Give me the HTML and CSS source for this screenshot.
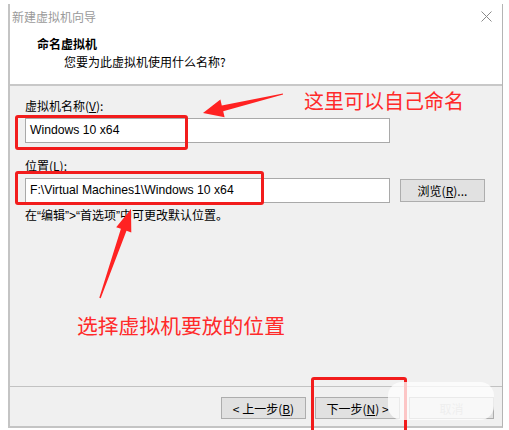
FILE: index.html
```html
<!DOCTYPE html>
<html lang="zh-CN">
<head>
    <meta charset="UTF-8">
    <title>新建虚拟机向导</title>
    <link rel="stylesheet" href="styles.css">
</head>
<body>
    <div class="screen">
        <div class="wizard">
            <div class="title-bar">
                <span class="title-text">新建虚拟机向导</span>
                <span class="close-btn">
                    <svg width="11" height="11" viewBox="0 0 11 11"><path d="M0.5 0.5 L10.5 10.5 M10.5 0.5 L0.5 10.5" stroke="#8a8a8a" stroke-width="1" fill="none"/></svg>
                </span>
            </div>
            <div class="wizard-header">
                <div class="header-title">命名虚拟机</div>
                <div class="header-sub">您要为此虚拟机使用什么名称?</div>
            </div>

            <div class="wizard-body">
                <div class="field-label">虚拟机名称(<u>V</u>):</div>
                <div class="field-row">
                    <div class="text-input">Windows 10 x64</div>
                </div>

                <div class="field-label second">位置(<u>L</u>):</div>
                <div class="field-row">
                    <div class="text-input">F:\Virtual Machines1\Windows 10 x64</div>
                    <button class="win-btn browse">浏览(<u>R</u>)...</button>
                </div>
                <div class="hint">在“编辑”&gt;“首选项”中可更改默认位置。</div>
            </div>

            <div class="wizard-footer">
                <button class="win-btn">&lt; 上一步(<u>B</u>)</button>
                <button class="win-btn">下一步(<u>N</u>) &gt;</button>
                <button class="win-btn cancel">取消</button>
            </div>
        </div>

        <!-- 标注 -->
        <div class="mark mark-name"></div>
        <div class="mark mark-path"></div>
        <div class="mark mark-next"></div>
        <div class="note note-name">这里可以自己命名</div>
        <div class="note note-path">选择虚拟机要放的位置</div>
        <svg class="arrows" width="509" height="430" viewBox="0 0 509 430">
            <polygon fill="#ff2222" points="203,113 224.6,117.2 223.2,111.3 283.1,94.5 282.9,93.5 221.8,105.5 220.4,99.6"/>
            <polygon fill="#ff2222" points="131,209 131.3,232.4 126.5,230.8 100.7,298.2 99.3,297.8 120.9,228.8 116.2,227.2"/>
        </svg>
        <div class="watermark"></div>
    </div>
</body>
</html>
```

FILE: styles.css
```css
* { margin: 0; padding: 0; box-sizing: border-box; }

body {
    background: #fff;
    font-family: "Noto Sans CJK SC", "Liberation Sans", sans-serif;
    font-size: 12px;
    color: #000;
}

.screen {
    position: relative;
    width: 509px;
    height: 430px;
    overflow: hidden;
    padding: 4px 6px 2px 8px;
}

.wizard {
    height: 100%;
    display: flex;
    flex-direction: column;
    border-left: 2px solid #c4c4c4;
    border-right: 1px solid #b4b4b4;
    border-bottom: 2px solid #c4c4c4;
    background: #f0f0f0;
}

.title-bar {
    height: 25px;
    background: #fff;
    display: flex;
    align-items: center;
    justify-content: space-between;
    padding: 0 10px 0 2px;
}

.title-text {
    color: #9a9a9a;
    font-size: 12px;
}

.close-btn {
    display: flex;
    align-items: center;
}

.wizard-header {
    height: 57px;
    background: #fff;
    border-bottom: 2px solid #c8c8c8;
    padding: 6px 0 0 27px;
}

.header-title {
    font-weight: 700;
    line-height: 18px;
}

.header-sub {
    padding-left: 27px;
    line-height: 18px;
}

.wizard-body {
    flex: 1;
    padding: 12px 0 0 15px;
    border-bottom: 1px solid #c2c2c2;
}

.field-label {
    line-height: 16px;
    margin-bottom: 4px;
}

.field-label.second {
    margin-top: 15px;
}

.field-row {
    display: flex;
    align-items: center;
    gap: 10px;
}

.text-input {
    width: 365px;
    height: 25px;
    background: #fff;
    border: 1px solid #a9a9a9;
    padding: 0 4px;
    line-height: 23px;
    font-family: "Liberation Sans", "Noto Sans CJK SC", sans-serif;
    font-size: 12.2px;
}

.hint {
    margin-top: 5px;
    line-height: 16px;
    font-family: "Liberation Sans", "Noto Sans CJK SC", sans-serif;
}

.win-btn {
    height: 22px;
    background: #e1e1e1;
    border: 1px solid #adadad;
    font-family: "Noto Sans CJK SC", "Liberation Sans", sans-serif;
    font-size: 12px;
    color: #000;
}

.browse {
    width: 85px;
    height: 23px;
}

.wizard-footer {
    height: 39px;
    display: flex;
    justify-content: flex-end;
    gap: 9px;
    padding: 10px 8px 0 0;
}

.wizard-footer .win-btn {
    width: 85px;
}

.wizard-footer .cancel {
    color: #bbb;
}

/* 红色标注 */
.mark {
    position: absolute;
    border: 3px solid #f21c1c;
    border-radius: 3px;
}

.mark-name { left: 15px; top: 115px; width: 173px; height: 35px; }
.mark-path { left: 15px; top: 171px; width: 249px; height: 34px; }
.mark-next { left: 311px; top: 377px; width: 96px; height: 60px; }

.note {
    position: absolute;
    color: #ff2a2a;
    font-size: 20px;
    line-height: 24px;
    font-family: "Noto Sans CJK SC", sans-serif;
}

.note-name { left: 304px; top: 89px; }
.note-path { left: 77px; top: 313px; font-size: 20.8px; }

.arrows {
    position: absolute;
    left: 0;
    top: 0;
}

.watermark {
    position: absolute;
    left: 388px;
    top: 382px;
    width: 106px;
    height: 38px;
    border-radius: 14px;
    background: rgba(255,255,255,0.75);
}
```
